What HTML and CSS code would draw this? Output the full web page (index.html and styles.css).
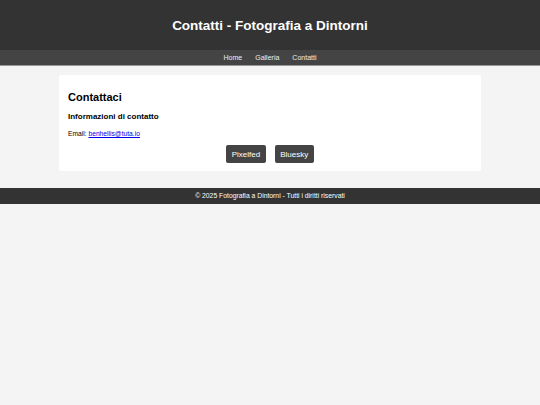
FILE: index.html
```html
<!DOCTYPE html>
<html lang="it">
<head>
<meta charset="utf-8">
<title>Contatti - Fotografia a Dintorni</title>
<link rel="stylesheet" href="styles.css">
</head>
<body>
<header class="site-header">
  <h1 class="site-title">Contatti - Fotografia a Dintorni</h1>
</header>
<nav class="site-nav">
  <a href="#">Home</a>
  <a href="#">Galleria</a>
  <a href="#">Contatti</a>
</nav>
<main class="content">
  <h2 class="page-title">Contattaci</h2>
  <h3 class="section-title">Informazioni di contatto</h3>
  <p class="email">Email: <a href="#">benhellis@tuta.io</a></p>
  <div class="social">
    <a class="btn" href="#">Pixelfed</a>
    <a class="btn" href="#">Bluesky</a>
  </div>
</main>
<footer class="site-footer">© 2025 Fotografia a Dintorni - Tutti i diritti riservati</footer>
</body>
</html>
```
FILE: styles.css
```css
body {
  margin: 0;
  background: #f4f4f4;
  font-family: "Liberation Sans", Arial, sans-serif;
  color: #000;
}
.site-header {
  background: #333;
  height: 50px;
  display: flex;
  align-items: center;
  justify-content: center;
}
.site-title {
  margin: 0;
  color: #fff;
  font-size: 13.5px;
  font-weight: bold;
}
.site-nav {
  background: #444;
  height: 16px;
  display: flex;
  align-items: center;
  justify-content: center;
  gap: 13px;
  border-bottom: 1px solid #999;
  box-sizing: border-box;
}
.site-nav a {
  color: #eee;
  text-decoration: none;
  font-size: 7px;
}
.content {
  width: 422px;
  box-sizing: border-box;
  margin: 9px auto 17px;
  background: #fff;
  border-radius: 2px;
  padding: 16px 9px 8px;
}
.page-title {
  margin: 0 0 9px;
  font-size: 11px;
}
.section-title {
  margin: 0 0 9px;
  font-size: 8px;
}
.email {
  margin: 0 0 8px;
  font-size: 6.7px;
}
.email a {
  color: #00e;
}
.social {
  display: flex;
  justify-content: center;
  gap: 9px;
}
.btn {
  background: #444;
  color: #fff;
  text-decoration: none;
  font-size: 8px;
  padding: 0 5.5px;
  height: 18px;
  display: flex;
  align-items: center;
  border-radius: 2px;
}
.site-footer {
  background: #333;
  color: #fff;
  text-align: center;
  font-size: 6.8px;
  height: 16px;
  line-height: 16px;
}
```
